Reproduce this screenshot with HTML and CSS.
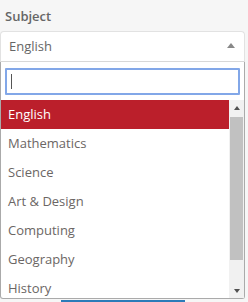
FILE: index.html
```html
<!DOCTYPE html>
<html>
<head>
<meta charset="utf-8">
<link rel="stylesheet" href="styles.css">
</head>
<body>
<div class="field">
  <label class="label">Subject</label>
  <div class="select">
    <span class="value">English</span>
    <span class="arrow"></span>
  </div>
  <div class="dropdown">
    <div class="search"><div class="search-input"><span class="caret"></span></div></div>
    <div class="results">
      <ul class="options">
        <li class="option active">English</li>
        <li class="option">Mathematics</li>
        <li class="option">Science</li>
        <li class="option">Art &amp; Design</li>
        <li class="option">Computing</li>
        <li class="option">Geography</li>
        <li class="option">History</li>
      </ul>
      <div class="scrollbar">
        <div class="sb-btn"><span class="tri-up"></span></div>
        <div class="sb-track"><div class="sb-thumb"></div></div>
        <div class="sb-btn"><span class="tri-down"></span></div>
      </div>
    </div>
  </div>
  <div class="button-peek"></div>
</div>
</body>
</html>
```
FILE: styles.css
```css
html, body {
  margin: 0;
  padding: 0;
  background: #f6f6f6;
  font-family: "Open Sans", "Liberation Sans", sans-serif;
}
.field {
  width: 245px;
}
.label {
  display: block;
  padding: 7px 0 0 5px;
  height: 31px;
  box-sizing: border-box;
  font-size: 13px;
  font-weight: 600;
  color: #666;
}
.select {
  display: flex;
  align-items: center;
  justify-content: space-between;
  height: 31px;
  box-sizing: border-box;
  background: #fff;
  border: 1px solid #e2e2e2;
  border-bottom-color: #d8d8d8;
  border-radius: 4px 4px 0 0;
  padding: 0 9px 2px 8px;
  font-size: 13px;
  color: #666;
}
.arrow {
  width: 0;
  height: 0;
  border-left: 4px solid transparent;
  border-right: 4px solid transparent;
  border-bottom: 5px solid #888;
}
.dropdown {
  background: #fff;
  border: 1px solid #aaa;
  border-top: none;
  border-radius: 0 0 3px 3px;
}
.search {
  padding: 6px 4px 5px 4px;
}
.search-input {
  display: flex;
  align-items: center;
  height: 27px;
  box-sizing: border-box;
  border: 2px solid #82a7e8;
  border-radius: 1px;
  background: #fff;
  padding: 0 4px;
}
.caret {
  width: 1px;
  height: 15px;
  background: #555;
}
.results {
  display: flex;
  height: 198px;
}
.options {
  flex: 1;
  list-style: none;
  margin: 0;
  padding: 0;
  overflow: hidden;
}
.option {
  height: 29px;
  line-height: 29px;
  padding-left: 7px;
  font-size: 13px;
  color: #6b6664;
}
.option.active {
  background: #bb1f2b;
  color: #fff;
}
.scrollbar {
  width: 15px;
  background: #f1f1f1;
  display: flex;
  flex-direction: column;
}
.sb-btn {
  height: 15px;
  display: flex;
  align-items: center;
  justify-content: center;
}
.sb-track {
  flex: 1;
  padding: 2px 1px 0 1px;
}
.sb-thumb {
  height: 143px;
  background: #c1c1c1;
}
.tri-up, .tri-down {
  width: 0;
  height: 0;
  border-left: 3.5px solid transparent;
  border-right: 3.5px solid transparent;
}
.tri-up {
  border-bottom: 4px solid #505050;
}
.tri-down {
  border-top: 4px solid #505050;
}
.button-peek {
  margin: 1px 0 0 61px;
  width: 124px;
  height: 4px;
  background: #2b7bb9;
}
```
